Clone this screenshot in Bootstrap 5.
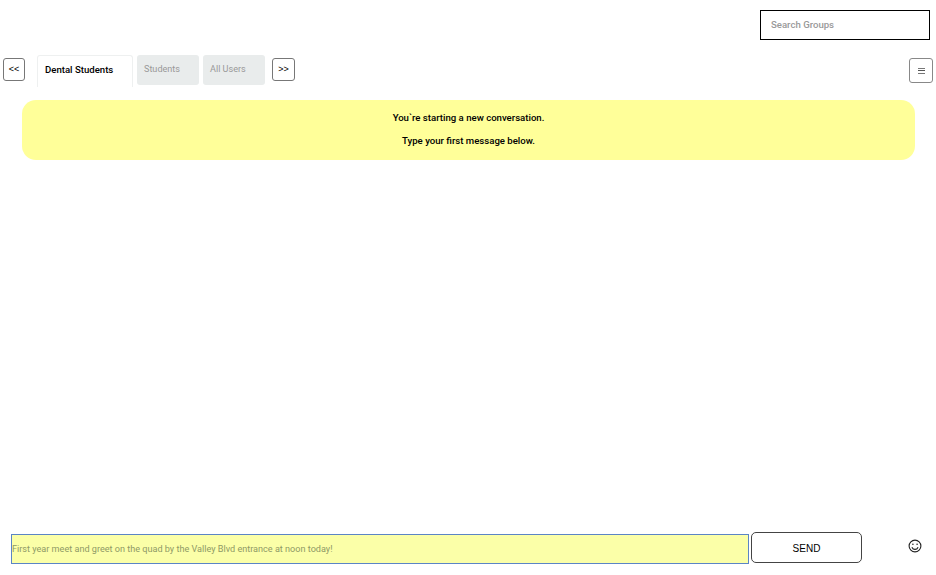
<!DOCTYPE html>
<html lang="en">
<head>
<meta charset="utf-8">
<title>Group chat</title>
<link rel="stylesheet" href="https://cdn.jsdelivr.net/npm/bootstrap@5.3.0/dist/css/bootstrap.min.css">
<style>
html,body{height:100%;overflow:hidden}
body{font-family:Roboto,"Liberation Sans",sans-serif;background:#fff;color:#000}
.chat-page{height:575px;display:flex;flex-direction:column}
.search-bar{padding:10px 6px 0 0;height:55px}
.search-box{width:170px;height:30px;border:1px solid #000;border-radius:0;font-size:9.6px;font-weight:500;padding:0 10px 2px;box-shadow:none;font-family:inherit}
.search-box::placeholder{color:#999;opacity:1}
.tab-row{height:32px;padding:0 3px 0 3px}
.scroll-btn{width:22px;height:23px;padding:0;font-size:9px;font-weight:400;line-height:1;color:#000;background:#fff;border:1px solid #777;border-radius:3px;font-family:"Liberation Sans",sans-serif;margin-top:3px}
.scroll-next{width:23px;margin-left:7px}
.tab-list{margin-left:12px;gap:4px;border:0;flex-wrap:nowrap}
.tab-list .nav-link{height:32px;padding:0;display:block;border-radius:3px 3px 0 0;font-family:inherit}
.tab-list .tab-on{width:96px;font-size:9.6px;color:#000;font-weight:500;background:#fff;border:1px solid #eef0f0;border-bottom:0;padding:8px 0 0 7px;line-height:12px}
.tab-list .tab-off{width:62px;height:30px;font-size:9.1px;color:#999;background:#e9ecec;border:0;padding:8px 0 0 7px;line-height:12px;border-radius:3px}
.menu-btn{width:24px;height:25px;padding:0;background:#fff;border:1px solid #888;border-radius:3px;margin-top:3px}
.menu-glyph{display:block;width:7px;height:6px;margin:0 auto;border-top:1px solid #777;border-bottom:1px solid #777;position:relative}
.menu-glyph::after{content:"";position:absolute;left:0;right:0;top:1.5px;height:1px;background:#555}
.notice-wrap{padding:13px 21px 0 22px}
.notice{height:60px;background:#ffff99;border-radius:14px;text-align:center;font-size:9.6px;font-weight:500;padding-top:12px;line-height:12px}
.notice p{margin:0 0 11px}
.compose{margin-top:auto;height:43px;padding-left:11px;align-items:flex-start}
.compose-input{width:738px;height:30px;margin-top:2px;border:1px solid #5b85c5;border-radius:0;background:#fbffa8;font-size:9.1px;padding:0 0;box-shadow:none;font-family:inherit}
.compose-input::placeholder{color:#8f9a66;opacity:1}
.send-btn{width:111px;height:31px;margin-left:2px;padding:1px 0 0;background:#fff;border:1px solid #444;border-radius:5px;font-size:10px;color:#000;font-family:"Liberation Sans",sans-serif}
.smile{margin:7px 0 0 46px;display:block}
</style>
</head>
<body>
<div class="chat-page">
  <div class="search-bar d-flex justify-content-end">
    <input class="form-control search-box" type="text" placeholder="Search Groups">
  </div>
  <div class="tab-row d-flex align-items-start">
    <button class="btn scroll-btn" type="button">&lt;&lt;</button>
    <ul class="nav tab-list">
      <li class="nav-item"><a class="nav-link tab-on" href="#">Dental Students</a></li>
      <li class="nav-item"><a class="nav-link tab-off" href="#">Students</a></li>
      <li class="nav-item"><a class="nav-link tab-off" href="#">All Users</a></li>
    </ul>
    <button class="btn scroll-btn scroll-next" type="button">&gt;&gt;</button>
    <button class="btn menu-btn ms-auto" type="button" aria-label="Menu"><span class="menu-glyph"></span></button>
  </div>
  <div class="notice-wrap">
    <div class="notice">
      <p>You`re starting a new conversation.</p>
      <p>Type your first message below.</p>
    </div>
  </div>
  <div class="compose d-flex">
    <input class="form-control compose-input" type="text" placeholder="First year meet and greet on the quad by the Valley Blvd entrance at noon today!">
    <button class="btn send-btn" type="button">SEND</button>
    <svg class="smile" width="14" height="14" viewBox="0 0 14 14" fill="none" stroke="#222" stroke-width="1.1" aria-label="Emoji">
      <circle cx="7" cy="7" r="5.9"/>
      <circle cx="4.9" cy="5.3" r=".8" fill="#222" stroke="none"/>
      <circle cx="9.1" cy="5.3" r=".8" fill="#222" stroke="none"/>
      <path d="M3.9 8.2c.7 1.5 1.8 2.2 3.1 2.2s2.4-.7 3.1-2.2"/>
    </svg>
  </div>
</div>
<script src="https://cdn.jsdelivr.net/npm/bootstrap@5.3.0/dist/js/bootstrap.bundle.min.js"></script>
</body>
</html>
